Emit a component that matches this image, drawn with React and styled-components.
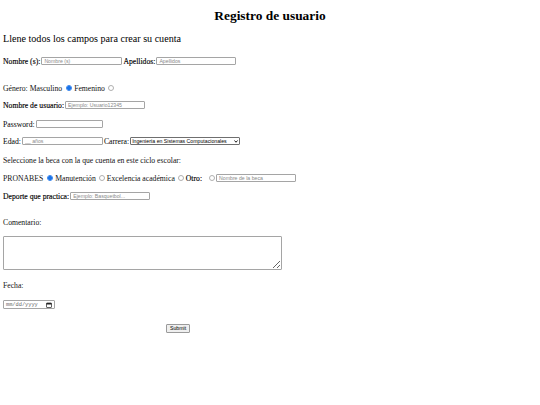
import React from 'react';
import styled, { createGlobalStyle } from 'styled-components';

const Global = createGlobalStyle`
  html, body { margin: 0; padding: 0; background: #fff; }
  body { font-family: "Liberation Serif", "Times New Roman", serif; color: #000; }
`;

const Page = styled.form` width: 540px; height: 405px; padding: 8px 3px 0; box-sizing: border-box; `;
const Title = styled.h1` margin: 0; height: 16px; line-height: 16px; font-size: 13.4px; font-weight: 700; text-align: center; `;
const Subtitle = styled.p` margin: 9px 0 0; height: 12px; line-height: 12px; font-size: 10.1px; `;
const Row = styled.div` display: flex; align-items: center; height: 12px; margin-top: ${p => p.$gap}px; font-size: 7.7px; white-space: nowrap; `;
const Label = styled.span`
  margin-right: ${p => p.$mr ?? 1}px;
  -webkit-text-stroke: ${p => (p.$bold ? '0.14px #000' : '0')};
`;
const Text = styled.span` margin-right: ${p => p.$mr ?? 0}px; color: #111; `;

const TextInput = styled.input`
  box-sizing: border-box; width: ${p => p.$w}px; height: 8px; padding: 0 2px; margin: 0 ${p => p.$mr ?? 1}px 0 0;
  border: 1px solid #a5a5a5; border-radius: 1px; font-family: "Liberation Sans", Arial, sans-serif; font-size: 5.2px; background: #fff;
  &::placeholder { color: #8a8a8a; }
`;

const Radio = styled.input.attrs({ type: 'radio' })`
  appearance: none; box-sizing: border-box; width: 6px; height: 6px; margin: 0 ${p => p.$mr ?? 2}px 0 ${p => p.$ml ?? 3}px;
  border-radius: 50%; border: 1px solid #b0b0b0; background: #fff;
  &:checked { border-color: #2f80ed; background: radial-gradient(circle, #1a73e8 0 62%, #8fb8f3 72%); }
`;

const SelectWrap = styled.span` position: relative; display: inline-flex; `;
const Select = styled.select`
  appearance: none; box-sizing: border-box; width: 110px; height: 8px; padding: 0 6px 0 1px; margin: 0;
  border: 1px solid #6f6f6f; border-radius: 1px; font-family: "Liberation Sans", Arial, sans-serif; font-size: 5.2px; line-height: 6px; color: #000; background: #fff;
`;
const Chevron = styled.svg` position: absolute; right: 2px; top: 2.5px; pointer-events: none; `;

const Area = styled.textarea`
  display: block; box-sizing: border-box; width: 279px; height: 34px; margin: 8px 0 0; padding: 0;
  border: 1px solid #a5a5a5; border-radius: 1px;
`;

const DateBox = styled.div`
  display: flex; align-items: center; justify-content: space-between; box-sizing: border-box; width: 52px; height: 9px; margin-top: 9px; padding: 0 2px;
  border: 1px solid #a5a5a5; border-radius: 1px; font-family: "Liberation Mono", monospace; font-size: 5.3px; color: #6a6a6a;
`;

const SubmitRow = styled.div` display: flex; margin-top: 15px; padding-left: 163px; `;
const SubmitButton = styled.button`
  box-sizing: border-box; width: 24px; height: 9px; padding: 0; border: 1px solid #9a9a9a; border-radius: 1px; background: #efefef;
  font-family: "Liberation Sans", Arial, sans-serif; font-size: 5.2px; line-height: 7px; color: #000;
`;

const Calendar = () => (
  <svg width="6" height="6" viewBox="0 0 12 12">
    <rect x="1" y="2" width="10" height="9" rx="1" fill="none" stroke="#222" strokeWidth="1.4" />
    <rect x="1" y="2" width="10" height="3" fill="#222" />
  </svg>
);

export default function App() {
  return (
    <>
      <Global />
      <Page onSubmit={e => e.preventDefault()}>
        <Title>Registro de usuario</Title>
        <Subtitle>Llene todos los campos para crear su cuenta</Subtitle>

        <Row $gap={10}>
          <Label $bold>Nombre (s):</Label>
          <TextInput $w={81} placeholder="Nombre (s)" />
          <Label $bold>Apellidos:</Label>
          <TextInput $w={80} placeholder="Apellidos" />
        </Row>

        <Row $gap={15}>
          <Text>Género: Masculino</Text>
          <Radio name="genero" defaultChecked $ml={4} />
          <Text>Femenino</Text>
          <Radio name="genero" />
        </Row>

        <Row $gap={5}>
          <Label $bold>Nombre de usuario:</Label>
          <TextInput $w={80} placeholder="Ejemplo: Usuario12345" />
        </Row>

        <Row $gap={7}>
          <Label>Password:</Label>
          <TextInput $w={67} type="password" />
        </Row>

        <Row $gap={5}>
          <Label>Edad:</Label>
          <TextInput $w={81} placeholder="__ años" />
          <Label>Carrera:</Label>
          <SelectWrap>
            <Select defaultValue="isc">
              <option value="isc">Ingeniería en Sistemas Computacionales</option>
            </Select>
            <Chevron width="4" height="3" viewBox="0 0 8 6">
              <path d="M1 1 L4 4.5 L7 1" fill="none" stroke="#000" strokeWidth="1.8" />
            </Chevron>
          </SelectWrap>
        </Row>

        <Row $gap={7}>
          <Text>Seleccione la beca con la que cuenta en este ciclo escolar:</Text>
        </Row>

        <Row $gap={6}>
          <Text>PRONABES</Text>
          <Radio name="beca" defaultChecked $ml={4} />
          <Text>Manutención</Text>
          <Radio name="beca" />
          <Text>Excelencia académica</Text>
          <Radio name="beca" />
          <Label $bold>Otro:</Label>
          <Radio name="beca" $ml={6} $mr={1} />
          <TextInput $w={80} placeholder="Nombre de la beca" />
        </Row>

        <Row $gap={6}>
          <Label $bold>Deporte que practica:</Label>
          <TextInput $w={80} placeholder="Ejemplo: Basquetbol..." />
        </Row>

        <Row $gap={14}>
          <Text>Comentario:</Text>
        </Row>
        <Area />

        <Row $gap={9}>
          <Text>Fecha:</Text>
        </Row>
        <DateBox>
          <span>mm/dd/yyyy</span>
          <Calendar />
        </DateBox>

        <SubmitRow>
          <SubmitButton type="submit">Submit</SubmitButton>
        </SubmitRow>
      </Page>
    </>
  );
}
